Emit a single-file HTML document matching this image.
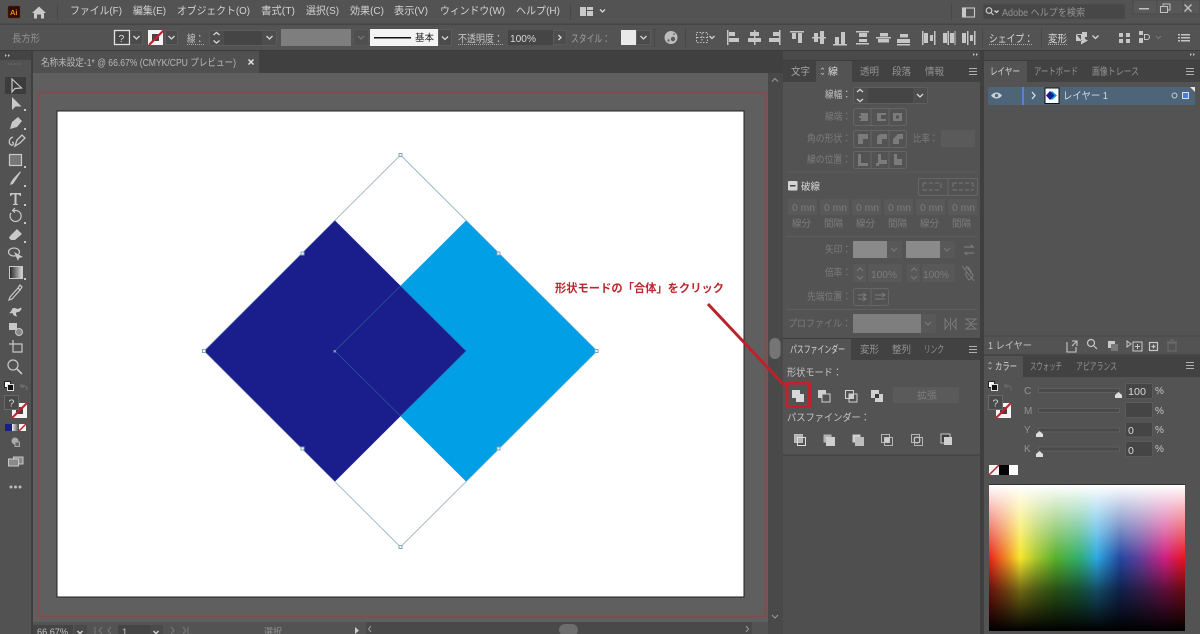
<!DOCTYPE html>
<html lang="ja"><head><meta charset="utf-8"><title>Illustrator</title>
<style>
html,body{margin:0;padding:0;background:#535353;width:1200px;height:634px;overflow:hidden}
svg{display:block;filter:blur(.35px)}
text{font-family:"Liberation Sans","Noto Sans CJK JP",sans-serif;font-size:10px;fill:#cfcfcf}
.m{font-size:10.5px;fill:#d2d2d2}
.c{fill:#c4c4c4}
.d{fill:#7c7c7c}
.t{fill:#939393}
.b{fill:#d8d8d8}
.i{fill:none;stroke:#c8c8c8;stroke-width:1.2}
.f{fill:#c8c8c8}
.g{fill:#7b7b7b}
.o{fill:none;stroke:#656565;stroke-width:1}
.ch{fill:none;stroke:#d6d6d6;stroke-width:1.3}
.chd{fill:none;stroke:#777;stroke-width:1.2}
</style></head><body>
<svg width="1200" height="634" viewBox="0 0 1200 634" xmlns="http://www.w3.org/2000/svg">
<defs>
<linearGradient id="hue" x1="0" x2="1" y1="0" y2="0">
<stop offset="0" stop-color="#e8201c"/><stop offset=".09" stop-color="#f08a22"/><stop offset=".16" stop-color="#f7e62c"/><stop offset=".24" stop-color="#a8c82c"/><stop offset=".34" stop-color="#58b02c"/><stop offset=".46" stop-color="#2fae70"/><stop offset=".55" stop-color="#2ba8e0"/><stop offset=".67" stop-color="#2347a2"/><stop offset=".78" stop-color="#6a3b98"/><stop offset=".9" stop-color="#d01f80"/><stop offset="1" stop-color="#e8141c"/>
</linearGradient>
<linearGradient id="wh" x1="0" x2="0" y1="0" y2="1"><stop offset="0" stop-color="#fff"/><stop offset=".5" stop-color="#fff" stop-opacity="0"/></linearGradient>
<linearGradient id="bk" x1="0" x2="0" y1="0" y2="1"><stop offset=".5" stop-color="#000" stop-opacity="0"/><stop offset=".72" stop-color="#000" stop-opacity=".55"/><stop offset="1" stop-color="#000"/></linearGradient>
<linearGradient id="gr" x1="0" x2="1" y1="0" y2="0"><stop offset="0" stop-color="#222"/><stop offset="1" stop-color="#ddd"/></linearGradient>
<linearGradient id="cm" x1="0" x2="1" y1="0" y2="0"><stop offset="0" stop-color="#eee"/><stop offset="1" stop-color="#444"/></linearGradient>
<symbol id="menu" viewBox="0 0 9 7" overflow="visible"><path d="M0 .5h8M0 3.500h8M0 6.500h8" stroke="#b0b0b0" stroke-width="1"/></symbol>
</defs>

<!-- base -->
<rect width="1200" height="634" fill="#535353"/>
<rect x="0" y="23.500" width="1200" height="1.500" fill="#454545"/>
<rect x="0" y="50" width="1200" height="1" fill="#3c3c3c"/>

<!-- Title/menu row -->
<rect x="8" y="6" width="12" height="12" rx="1" fill="#2f0d05" stroke="#5a2a18" stroke-width=".5"/>
<text x="10" y="15" style="font-size:7.500px;font-weight:bold;fill:#f08a1a">Ai</text>
<path d="M32 13L39 6.500L46 13H44V18.500H41V14.500H37V18.500H34V13Z" fill="#c9c9c9"/>
<rect x="57" y="4" width="1" height="16" fill="#484848"/>
<text class="m" x="70" y="14" textLength="52" lengthAdjust="spacingAndGlyphs">ファイル(F)</text>
<text class="m" x="133" y="14" textLength="33" lengthAdjust="spacingAndGlyphs">編集(E)</text>
<text class="m" x="177" y="14" textLength="73" lengthAdjust="spacingAndGlyphs">オブジェクト(O)</text>
<text class="m" x="261" y="14" textLength="34" lengthAdjust="spacingAndGlyphs">書式(T)</text>
<text class="m" x="306" y="14" textLength="33" lengthAdjust="spacingAndGlyphs">選択(S)</text>
<text class="m" x="350" y="14" textLength="34" lengthAdjust="spacingAndGlyphs">効果(C)</text>
<text class="m" x="394" y="14" textLength="34" lengthAdjust="spacingAndGlyphs">表示(V)</text>
<text class="m" x="440" y="14" textLength="65" lengthAdjust="spacingAndGlyphs">ウィンドウ(W)</text>
<text class="m" x="516" y="14" textLength="44" lengthAdjust="spacingAndGlyphs">ヘルプ(H)</text>
<rect x="570" y="4" width="1" height="16" fill="#484848"/>
<path d="M580 7h6v9h-6zM587 7h6v3h-6zM587 11h6v5h-6z" fill="#c9c9c9"/>
<path class="ch" d="M600 9.500l2.500 2.500 2.500-2.500"/>
<rect x="951" y="4" width="1" height="16" fill="#484848"/>
<rect x="962.500" y="8" width="12" height="9" fill="none" stroke="#c8c8c8" stroke-width="1.100"/><rect x="963" y="8" width="3" height="9" fill="#c8c8c8"/>
<rect x="983" y="4" width="142" height="15" rx="1" fill="#474747" stroke="#4f4f4f"/>
<circle cx="989" cy="10.500" r="2.800" class="i"/><path class="i" d="M991 12.500l2.500 2.500"/><path class="ch" d="M994.500 10.500l2 2 2-2" stroke-width="1"/>
<text x="1002" y="16" class="t" textLength="83" lengthAdjust="spacingAndGlyphs">Adobe ヘルプを検索</text>
<rect x="1133" y="0" width="24" height="14" fill="#585858" stroke="#4a4a4a"/><rect x="1157" y="0" width="26" height="14" fill="#585858" stroke="#4a4a4a"/><rect x="1183" y="0" width="17" height="14" fill="#585858" stroke="#4a4a4a"/>
<rect x="1139" y="8" width="10" height="1.500" fill="#c0c0c0"/>
<rect x="1160.500" y="6.500" width="7" height="6" fill="none" stroke="#c0c0c0"/><path d="M1163 6.500v-2.500h7v6h-2.500" fill="none" stroke="#c0c0c0"/>
<path d="M1184.500 4.500l7 7M1191.500 4.500l-7 7" stroke="#c0c0c0" stroke-width="1.400"/>

<!-- Control bar -->
<text class="t" x="12" y="42" textLength="28" lengthAdjust="spacingAndGlyphs">長方形</text>
<rect x="114.500" y="30.500" width="15" height="14" fill="#484848" stroke="#e0e0e0" stroke-width="1.300"/>
<text x="118.500" y="42" style="font-size:10.500px;fill:#ddd">?</text>
<rect x="130.500" y="30.500" width="12" height="14" fill="#4b4b4b" stroke="#5c5c5c"/><path class="ch" d="M133.500 36l3 3 3-3"/>
<rect x="148" y="30" width="15" height="15" fill="#f4f4f4"/><rect x="152" y="34" width="7" height="7" fill="#444"/><path d="M149 45L164 30" stroke="#c2232c" stroke-width="2.200"/>
<rect x="165.500" y="30.500" width="12" height="14" fill="#4b4b4b" stroke="#5c5c5c"/><path class="ch" d="M168.500 36l3 3 3-3"/>
<text class="c" x="187" y="42" textLength="17" lengthAdjust="spacingAndGlyphs" style="font-size:10.500px">線：</text>
<path d="M187 44.500h17" stroke="#aaa" stroke-dasharray="1 1"/>
<rect x="209.500" y="30.500" width="67" height="15" rx="2" fill="#4d4d4d" stroke="#5c5c5c"/>
<rect x="224" y="31" width="38" height="14" fill="#454545"/>
<path class="ch" d="M213.500 35l3-2.500 3 2.500M213.500 40.500l3 2.500 3-2.500"/><path class="ch" d="M266.500 36l3 3 3-3"/>
<rect x="281" y="29" width="70" height="17" fill="#7e7e7e"/>
<rect x="353.500" y="29.500" width="15" height="16" fill="#4f4f4f" stroke="#585858"/><path class="chd" d="M358 36l3 3 3-3"/>
<rect x="370" y="29" width="68" height="17" fill="#f3f3f3"/><rect x="374" y="37" width="37" height="1.500" fill="#111"/>
<text x="415" y="41" style="font-size:9.500px;fill:#222" textLength="19" lengthAdjust="spacingAndGlyphs">基本</text>
<rect x="438.500" y="29.500" width="13" height="16" fill="#4b4b4b" stroke="#5c5c5c"/><path class="ch" d="M442 36.500l3 3 3-3"/>
<text class="c" x="458" y="42" textLength="45" lengthAdjust="spacingAndGlyphs" style="font-size:10.500px">不透明度：</text>
<path d="M458 44.500h45" stroke="#aaa" stroke-dasharray="1 1"/>
<rect x="508" y="30" width="45" height="15" fill="#454545"/><text x="510" y="42" class="b" textLength="26" lengthAdjust="spacingAndGlyphs" style="font-size:10.500px">100%</text>
<rect x="553.500" y="30.500" width="13" height="14" fill="#4d4d4d" stroke="#5a5a5a"/><path class="ch" d="M558.500 35l2.500 2.500-2.500 2.500"/>
<text x="571" y="42" textLength="39" lengthAdjust="spacingAndGlyphs" style="font-size:10.500px;fill:#a0a0a0">スタイル：</text>
<rect x="621" y="30" width="15" height="15" fill="#e9e9e9"/>
<rect x="636.500" y="30.500" width="14" height="14" fill="#4b4b4b" stroke="#5c5c5c"/><path class="ch" d="M640.500 36l3 3 3-3"/>
<rect x="654" y="28" width="1" height="19" fill="#484848"/>
<circle cx="671" cy="37.500" r="6.500" fill="#bdbdbd"/><circle cx="673" cy="39" r="2.200" fill="#5a5a5a"/><circle cx="668.500" cy="40.500" r="1.200" fill="#666"/><circle cx="674" cy="34" r="1" fill="#777"/>
<rect x="685" y="28" width="1" height="19" fill="#484848"/>
<rect x="696.500" y="32.500" width="11" height="10" fill="none" stroke="#c4c4c4" stroke-dasharray="1.500 1.500"/><path d="M702 33v9M697 37.500h10" stroke="#c4c4c4" stroke-dasharray="1.500 1.500"/><path class="ch" d="M709.500 36l2.500 2.500 2.500-2.500" stroke-width="1"/>
<!-- align icons -->
<g fill="#c6c6c6">
<rect x="727" y="30" width="1.500" height="15"/><rect x="729" y="32" width="6" height="4"/><rect x="729" y="38" width="10" height="4"/>
<rect x="754" y="30" width="1.500" height="15"/><rect x="750" y="32" width="9" height="4"/><rect x="748" y="38" width="13" height="4"/>
<rect x="779" y="30" width="1.500" height="15"/><rect x="773" y="32" width="6" height="4"/><rect x="769" y="38" width="10" height="4"/>
<rect x="790" y="31" width="14" height="1.500"/><rect x="792" y="33" width="4" height="6"/><rect x="798" y="33" width="4" height="10"/>
<rect x="812" y="37" width="14" height="1.500"/><rect x="814" y="33" width="4" height="9"/><rect x="820" y="31" width="4" height="13"/>
<rect x="833" y="44" width="14" height="1.500"/><rect x="835" y="37" width="4" height="7"/><rect x="841" y="32" width="4" height="12"/>
<rect x="856" y="31" width="13" height="1.500"/><rect x="859" y="33" width="8" height="4"/><rect x="856" y="43" width="13" height="1.500"/><rect x="859" y="39" width="8" height="3"/>
<rect x="876" y="37" width="15" height="1.500"/><rect x="880" y="33" width="8" height="3.500"/><rect x="878" y="39" width="11" height="3.500"/>
<rect x="897" y="44" width="13" height="1.500"/><rect x="900" y="34" width="8" height="3.500"/><rect x="897" y="39" width="13" height="4"/>
<rect x="922" y="31" width="1.500" height="14"/><rect x="924" y="33" width="4" height="10"/><rect x="930" y="35" width="3" height="6"/><rect x="934" y="31" width="1.500" height="14"/>
<rect x="943" y="33" width="4" height="10"/><rect x="947.500" y="31" width="1.500" height="14"/><rect x="950" y="33" width="4" height="10"/><rect x="954.500" y="31" width="1" height="14"/>
<rect x="962" y="33" width="4" height="10"/><rect x="967" y="31" width="1.500" height="14"/><rect x="970" y="35" width="3" height="6"/><rect x="974" y="31" width="1.500" height="14"/>
</g>
<rect x="982" y="28" width="1" height="19" fill="#484848"/>
<text class="b" x="989" y="42" textLength="44" lengthAdjust="spacingAndGlyphs" style="font-size:10.500px">シェイプ：</text><path d="M989 44.500h44" stroke="#aaa" stroke-dasharray="1 1"/>
<rect x="1041" y="28" width="1" height="19" fill="#484848"/>
<text class="b" x="1048" y="42" textLength="19" lengthAdjust="spacingAndGlyphs" style="font-size:10.500px">変形</text><path d="M1048 44.500h19" stroke="#aaa" stroke-dasharray="1 1"/>
<path d="M1076 34h6v-2h5v5h-2v2l3 1.500-7 4v-9.500h-5zM1076 34v7h6" fill="#c8c8c8"/>
<path class="ch" d="M1092.500 35.500l3 3 3-3"/>
<path d="M1119 33h4v4h-4zM1126 33h4v4h-4zM1119 39h4v4h-4zM1126 39h4v4h-4z" fill="#c6c6c6"/>
<path d="M1139 31h4v4h-4zM1139 38h4v5h-4zM1144 34h3a3 3 0 0 1 0 6h-3" fill="#c6c6c6"/><path d="M1145 35h2a2 2 0 0 1 0 4h-2" fill="#535353"/>
<path class="chd" d="M1156 36l2.500 2.500 2.500-2.500"/>
<path d="M1178 34h2v1.500h-2zM1181 34h9v1.500h-9zM1178 37h2v1.500h-2zM1181 37h9v1.500h-9zM1178 40h2v1.500h-2zM1181 40h9v1.500h-9z" fill="#c4c4c4"/>

<!-- Tab strip -->
<rect x="33" y="51" width="735" height="22" fill="#404040"/>
<rect x="33" y="51" width="226" height="22" fill="#505050"/>
<text x="41" y="66" textLength="195" lengthAdjust="spacingAndGlyphs" style="font-size:10px;fill:#b8b8b8">名称未設定-1* @ 66.67% (CMYK/CPU プレビュー)</text>
<path d="M248.500 59.500l5 5M253.500 59.500l-5 5" stroke="#e0e0e0" stroke-width="1.500"/>

<!-- Canvas -->
<rect x="33" y="73" width="735" height="549" fill="#5f5f5f"/>
<rect x="38.500" y="92.500" width="727" height="524" fill="none" stroke="#824c4e" stroke-width="2"/>
<rect x="57" y="111" width="687" height="486" fill="#fff" stroke="#222" stroke-width="1"/>
<!-- shapes -->
<path d="M400.500 155L597 351L400.500 547L204 351Z" fill="#fff" stroke="#9db5c6" stroke-width=".9"/>
<path d="M466 220.500L597 351L466 481.500L335 351Z" fill="#009fe6"/>
<path d="M335 220.500L466 351L335 481.500L204.500 351Z" fill="#1a1e8c"/>
<path d="M335 351L400.500 286L466 351L400.500 416Z" fill="#1a1e8c" stroke="#33619f" stroke-width=".6"/>
<g fill="#fff" stroke="#7fa3bc" stroke-width="1">
<rect x="399" y="153.500" width="3" height="3"/><rect x="202.500" y="349.500" width="3" height="3"/><rect x="595" y="349.500" width="3" height="3"/><rect x="399" y="545.500" width="3" height="3"/>
<rect x="301" y="252" width="3" height="3"/><rect x="497" y="252" width="3" height="3"/><rect x="301" y="447" width="3" height="3"/><rect x="497" y="447" width="3" height="3"/>
</g>
<rect x="333.500" y="350" width="2.500" height="2.500" fill="#6f97b4"/>
<text x="555" y="292" textLength="169" lengthAdjust="spacingAndGlyphs" style="font-size:11.500px;font-weight:bold;fill:#b9282f">形状モードの「合体」をクリック</text>

<!-- Toolbar -->
<rect x="0" y="51" width="31" height="583" fill="#525252"/>
<rect x="31" y="51" width="2" height="583" fill="#3f3f3f"/>
<rect x="0" y="51" width="31" height="9" fill="#444"/>
<path d="M5 54l2 1.500-2 1.500zM8 54l2 1.500-2 1.500z" fill="#bbb"/>
<path d="M8 64h13" stroke="#777" stroke-dasharray="1.500 1.500"/>
<rect x="5" y="77" width="21" height="17" rx="1" fill="#3c3c3c"/>
<path class="i" d="M12 79v13l3-3.500 6.500-.5z" stroke-width="1.300"/>
<path d="M12 97v13l3.500-3.500h6z" class="f"/><path d="M24 109h2v2h-2z" class="f"/>
<path d="M10 129l2-7 6-5 4 4-5 6z" class="f"/><path d="M24 128h2v2h-2z" class="f"/>
<path d="M15 146l2-6 5-5 3 3-5 5zM13 137c-4 1-5 6-2 8 3 1 3-3 1-3" fill="none" stroke="#c8c8c8" stroke-width="1.300"/>
<rect x="9.500" y="154.500" width="12" height="11" fill="#777" stroke="#c8c8c8" stroke-width="1.200"/><path d="M24 166h2v2h-2z" class="f"/>
<path d="M21 172l-6 9-2 3-3 1 1-3 2-3 7-7.500z" class="f"/><path d="M24 185h2v2h-2z" class="f"/>
<path d="M10 193h11v3h-1l-1-1.500h-2.500v9.500h1.500v1h-5v-1h1.500v-9.500h-2.500l-1 1.500h-1z" class="f"/><path d="M24 204h2v2h-2z" class="f"/>
<path class="i" d="M11 213a5.500 5.500 0 1 0 5 -2.500h-3M15 208l-2.500 2.500 2.500 2"/>
<path d="M24 222h2v2h-2z" class="f"/>
<path d="M10 236l7-7 5 5-7 6h-4l-2-2z" class="f"/><path d="M24 241h2v2h-2z" class="f"/>
<ellipse cx="14" cy="252" rx="5.500" ry="4" class="i"/><path d="M14 252l9 5-4 1-1 3z" class="f"/>
<rect x="9.500" y="266.500" width="13" height="12" fill="url(#gr)" stroke="#c8c8c8"/><path d="M24 278h2v2h-2z" class="f"/>
<path d="M10 297l8-9 2 2-8 9-3 1zM18 288l2-3 2 2-2 3z" fill="none" stroke="#c8c8c8" stroke-width="1.200"/>
<path d="M9 313c3-1 2-5 5-5s3 2 6 0 1 4-2 4-2 3-1 4-4 0-4-2-2 0-4-1z" class="f"/>
<rect x="9" y="323" width="8" height="7" class="f"/><circle cx="19" cy="332" r="3.500" fill="#888" stroke="#c8c8c8"/>
<path class="i" d="M13 342v-2M9 344h13v8h-9v-12"/>
<circle cx="13" cy="365" r="5" class="i"/><path d="M17 369l5 5" stroke="#c8c8c8" stroke-width="1.600"/>
<rect x="4.500" y="381.500" width="6" height="6" fill="#fff" stroke="#222"/><rect x="7.500" y="384.500" width="6" height="6" fill="#111" stroke="#ddd"/>
<path d="M21 386a4 4 0 0 1 6 4M21 384v3h3" fill="none" stroke="#777"/>
<rect x="12" y="403" width="15" height="15" fill="#f4f4f4"/><rect x="16" y="407" width="7" height="7" fill="#444"/><path d="M12 418l15-15" stroke="#c2232c" stroke-width="2"/>
<rect x="4.500" y="395.500" width="14" height="14" fill="#4a4a4a" stroke="#6a6a6a"/>
<text x="8.500" y="406.500" style="font-size:10.500px;fill:#ddd">?</text>
<rect x="5" y="424" width="7" height="7" fill="#1a1e8c"/><rect x="12" y="424" width="7" height="7" fill="url(#cm)"/><rect x="19" y="424" width="7" height="7" fill="#f3f3f3"/><path d="M19 431l7-7" stroke="#c2232c" stroke-width="1.400"/>
<circle cx="15" cy="441" r="3.500" fill="#aaa"/><rect x="15" y="442" width="4.500" height="4.500" fill="#666" stroke="#aaa"/>
<rect x="13.500" y="457" width="9.500" height="7" fill="#8a8a8a" stroke="#c8c8c8"/><path d="M8.500 459h10v7h-10z" fill="#8a8a8a" stroke="#c8c8c8"/>
<circle cx="11" cy="487" r="1.500" fill="#bbb"/><circle cx="15.500" cy="487" r="1.500" fill="#bbb"/><circle cx="20" cy="487" r="1.500" fill="#bbb"/>

<!-- Vertical scrollbar -->
<rect x="768" y="51" width="15" height="583" fill="#494949"/>
<rect x="768" y="51" width="15" height="22" fill="#404040"/>
<rect x="769.500" y="338" width="11" height="21" rx="5.500" fill="#757575"/>
<path d="M772 81.500l3-3 3 3M772 615l3 3 3-3" fill="none" stroke="#9a9a9a"/>

<!-- Status bar -->
<rect x="33" y="622" width="735" height="12" fill="#535353"/>
<rect x="33" y="625" width="40" height="9" fill="#454545"/>
<text class="c" x="37" y="635" textLength="31" lengthAdjust="spacingAndGlyphs" style="font-size:9.500px">66.67%</text>
<rect x="74" y="625" width="13" height="9" fill="#4a4a4a"/><path class="ch" d="M77.500 631l2.500 2.500 2.500-2.500"/>
<path d="M95 627v7M102 627l-3 3.500 3 3.500M111 627l-3 3.500 3 3.500" fill="none" stroke="#777"/>
<rect x="118" y="625" width="32" height="9" fill="#454545"/><text class="c" x="122" y="635" style="font-size:9.500px">1</text>
<rect x="150" y="625" width="13" height="9" fill="#4a4a4a"/><path class="ch" d="M153.500 631l2.500 2.500 2.500-2.500"/>
<path d="M171 627l3 3.500-3 3.500M183 627l3 3.500-3 3.500M188 627v7" fill="none" stroke="#777"/>
<text class="t" x="264" y="635" style="font-size:9.500px" textLength="18" lengthAdjust="spacingAndGlyphs">選択</text>
<path d="M355 627l4 3.500-4 3.500z" fill="#ccc"/>
<rect x="366" y="622" width="386" height="12" fill="#494949"/>
<path d="M371 626l-2.500 3 2.500 3M746 626l2.500 3-2.500 3" fill="none" stroke="#9a9a9a"/>
<rect x="559" y="624" width="19" height="12" rx="6" fill="#6d6d6d"/>

<!-- Dock gutters -->
<rect x="783" y="51" width="197" height="9" fill="#4a4a4a"/><rect x="984" y="51" width="216" height="9" fill="#4a4a4a"/>
<path d="M973 53l2 1.500-2 1.500zM976 53l2 1.500-2 1.500zM1190 53l2 1.500-2 1.500zM1193 53l2 1.500-2 1.500z" fill="#bbb"/>
<rect x="980" y="51" width="4" height="583" fill="#3f3f3f"/>
<rect x="783" y="60" width="197" height="1" fill="#3c3c3c"/><rect x="984" y="60" width="216" height="1" fill="#3c3c3c"/>

<!-- Stroke panel -->
<rect x="783" y="61" width="197" height="21" fill="#424242"/>
<rect x="816" y="61" width="36" height="21" fill="#535353"/>
<text x="791" y="75" textLength="19" lengthAdjust="spacingAndGlyphs" style="fill:#a6a6a6">文字</text>
<path d="M821 69.500l1.500-1.500 1.500 1.500M821 73l1.500 1.500 1.500-1.500" fill="none" stroke="#bbb" stroke-width=".8"/>
<text class="b" x="828" y="75">線</text>
<text class="t" x="860" y="75" textLength="19" lengthAdjust="spacingAndGlyphs">透明</text>
<text class="t" x="892" y="75" textLength="19" lengthAdjust="spacingAndGlyphs">段落</text>
<text class="t" x="925" y="75" textLength="19" lengthAdjust="spacingAndGlyphs">情報</text>
<use href="#menu" x="969" y="68" width="9" height="7"/>

<text class="c" x="825" y="98" textLength="26" lengthAdjust="spacingAndGlyphs">線幅：</text>
<rect x="853.500" y="87.500" width="74" height="16" rx="2" fill="#4d4d4d" stroke="#5e5e5e"/><rect x="868" y="88" width="45" height="15" fill="#454545"/>
<path class="ch" d="M857 92l3-2.500 3 2.500M857 99l3 2.500 3-2.500"/><path class="ch" d="M917 94l3 3 3-3"/>

<text class="d" x="825" y="120" textLength="26" lengthAdjust="spacingAndGlyphs">線端：</text>
<rect x="853.500" y="108.500" width="53" height="17" rx="2" class="o"/><path d="M871 109v16M889 109v16" stroke="#656565"/>
<path d="M859 113h9v8h-9l2-1v-2h-2v-2h2v-2z" class="g"/><path d="M877 113h9v2h-5v4h5v2h-9z" class="g"/><path d="M893 113h9v8h-9zM896 115.500v3h3v-3z" class="g" fill-rule="evenodd"/>
<text class="d" x="807" y="142" textLength="44" lengthAdjust="spacingAndGlyphs">角の形状：</text>
<rect x="853.500" y="130.500" width="53" height="17" rx="2" class="o"/><path d="M871 131v16M889 131v16" stroke="#656565"/>
<path d="M858 134h10v5h-5v5h-5z" class="g"/><path d="M877 144v-6c0-2 2-4 4-4h6v5h-5v5z" class="g"/><path d="M893 144v-5l5-5h5v5h-4v5z" class="g"/>
<text class="d" x="913" y="142" textLength="25" lengthAdjust="spacingAndGlyphs">比率：</text>
<rect x="941" y="130" width="34" height="17" fill="#5a5a5a"/>
<text class="d" x="807" y="163" textLength="44" lengthAdjust="spacingAndGlyphs">線の位置：</text>
<rect x="853.500" y="151.500" width="53" height="17" rx="2" class="o"/><path d="M871 152v16M889 152v16" stroke="#656565"/>
<path d="M858 154h3v9h7v3h-10z" class="g"/><path d="M878 154h3v6h6v4h-9zM876 163h3v3h-3z" class="g"/><path d="M894 154h3v5h5v6h-8z" class="g"/>

<rect x="788" y="181" width="9.500" height="9.500" rx="1" fill="#d4d4d4"/><rect x="790" y="185" width="5.500" height="1.500" fill="#444"/>
<text class="b" x="801" y="190" textLength="19" lengthAdjust="spacingAndGlyphs">破線</text>
<rect x="918.500" y="178.500" width="59" height="17" rx="1.500" class="o"/><path d="M948 179v16" stroke="#656565"/>
<path d="M923 183h18v1M923 190h18M923 183v7M941 184v6M953 183h20M953 190h20M953 183v7M973 183v7" fill="none" stroke="#777" stroke-dasharray="4 2"/>
<g fill="#595959">
<rect x="788" y="199" width="29" height="16"/><rect x="820" y="199" width="29" height="16"/><rect x="852" y="199" width="29" height="16"/><rect x="884" y="199" width="29" height="16"/><rect x="916" y="199" width="29" height="16"/><rect x="948" y="199" width="29" height="16"/>
</g>
<text class="d" x="792" y="211" textLength="23" lengthAdjust="spacingAndGlyphs">0 mn</text><text class="d" x="824" y="211" textLength="23" lengthAdjust="spacingAndGlyphs">0 mn</text><text class="d" x="856" y="211" textLength="23" lengthAdjust="spacingAndGlyphs">0 mn</text><text class="d" x="888" y="211" textLength="23" lengthAdjust="spacingAndGlyphs">0 mn</text><text class="d" x="920" y="211" textLength="23" lengthAdjust="spacingAndGlyphs">0 mn</text><text class="d" x="952" y="211" textLength="23" lengthAdjust="spacingAndGlyphs">0 mn</text>
<text class="d" x="792" y="227" textLength="19" lengthAdjust="spacingAndGlyphs">線分</text><text class="d" x="824" y="227" textLength="19" lengthAdjust="spacingAndGlyphs">間隔</text><text class="d" x="856" y="227" textLength="19" lengthAdjust="spacingAndGlyphs">線分</text><text class="d" x="888" y="227" textLength="19" lengthAdjust="spacingAndGlyphs">間隔</text><text class="d" x="920" y="227" textLength="19" lengthAdjust="spacingAndGlyphs">線分</text><text class="d" x="952" y="227" textLength="19" lengthAdjust="spacingAndGlyphs">間隔</text>
<rect x="786" y="171.500" width="191" height=".8" fill="#5e5e5e"/><rect x="786" y="236" width="191" height="1" fill="#5e5e5e"/><rect x="786" y="309" width="191" height="1" fill="#5e5e5e"/>

<text class="d" x="825" y="253" textLength="26" lengthAdjust="spacingAndGlyphs">矢印：</text>
<rect x="853" y="241" width="34" height="17" fill="#8a8a8a"/><rect x="887" y="241" width="15" height="17" fill="#585858"/><path class="chd" d="M891 248l3 3 3-3"/>
<rect x="906" y="241" width="34" height="17" fill="#8a8a8a"/><rect x="940" y="241" width="15" height="17" fill="#585858"/><path class="chd" d="M944 248l3 3 3-3"/>
<path d="M964 247h9l-2-2M974 253h-9l2 2" fill="none" stroke="#7b7b7b" stroke-width="1.300"/>
<text class="d" x="825" y="276" textLength="26" lengthAdjust="spacingAndGlyphs">倍率：</text>
<rect x="853" y="264" width="49" height="18" fill="#585858"/><path d="M867 264v18" fill="none" stroke="#4d4d4d"/>
<path class="chd" d="M857 271l3-3 3 3M857 276l3 3 3-3"/><text class="d" x="871" y="278" textLength="26" lengthAdjust="spacingAndGlyphs">100%</text>
<rect x="907" y="264" width="48" height="18" fill="#585858"/><path d="M921 264v18" fill="none" stroke="#4d4d4d"/><path class="chd" d="M911 271l3-3 3 3M911 276l3 3 3-3"/><text class="d" x="923" y="278" textLength="26" lengthAdjust="spacingAndGlyphs">100%</text>
<path d="M965 269l3-2 3 4v3M966 272v4l3 4 3-2 1-3-7-9M962 266l12 15" fill="none" stroke="#7b7b7b"/>
<text class="d" x="807" y="300" textLength="44" lengthAdjust="spacingAndGlyphs">先端位置：</text>
<rect x="853.500" y="288.500" width="35" height="17" rx="2" class="o"/><path d="M871 289v16" stroke="#656565"/>
<path d="M858 295h8M858 299h8M863 293l3 2-3 2M863 297l3 2-3 2" fill="none" stroke="#7b7b7b"/><path d="M875 295h10M875 299h10M882 293l3 2-3 2" fill="none" stroke="#7b7b7b"/>
<text class="d" x="788" y="327" textLength="63" lengthAdjust="spacingAndGlyphs">プロファイル：</text>
<rect x="853" y="314" width="68" height="19" fill="#7e7e7e"/><rect x="921" y="314" width="15" height="19" fill="#585858"/><path class="chd" d="M925 322l3 3 3-3"/>
<path d="M945 319v10l4-5zM956 319v10l-4-5zM950.500 318v12" fill="none" stroke="#7b7b7b"/>
<path d="M966 319h10l-5 4zM966 329h10l-5-4zM965 324h12" fill="none" stroke="#7b7b7b"/>

<!-- Pathfinder panel -->
<rect x="783" y="338" width="197" height="1" fill="#3c3c3c"/>
<rect x="783" y="339" width="197" height="21" fill="#424242"/>
<rect x="783" y="339" width="68" height="21" fill="#535353"/>
<text class="b" x="790" y="353" textLength="55" lengthAdjust="spacingAndGlyphs">パスファインダー</text>
<text class="t" x="860" y="353" textLength="19" lengthAdjust="spacingAndGlyphs">変形</text>
<text class="t" x="892" y="353" textLength="19" lengthAdjust="spacingAndGlyphs">整列</text>
<text class="t" x="924" y="353" textLength="20" lengthAdjust="spacingAndGlyphs">リンク</text>
<use href="#menu" x="969" y="346" width="9" height="7"/>
<text class="c" x="787" y="376" textLength="55" lengthAdjust="spacingAndGlyphs">形状モード：</text>
<!-- shape modes -->
<rect x="792" y="390" width="8" height="8" fill="#d8d8d8"/><rect x="796" y="394" width="8" height="8" fill="#d8d8d8"/>
<rect x="818" y="390" width="8" height="8" fill="#d0d0d0"/><rect x="822" y="394" width="8" height="8" fill="#535353" stroke="#d0d0d0"/>
<rect x="845.500" y="390.500" width="8" height="8" fill="none" stroke="#d0d0d0"/><rect x="849" y="394" width="8" height="8" fill="none" stroke="#d0d0d0"/><rect x="849" y="394" width="4.500" height="4.500" fill="#d0d0d0"/>
<rect x="871" y="390" width="8" height="8" fill="#d0d0d0"/><rect x="875" y="394" width="8" height="8" fill="#d0d0d0"/><rect x="875" y="394" width="4" height="4" fill="#3a3a3a"/>
<rect x="893" y="387" width="66" height="16" fill="#5a5a5a"/>
<text class="d" x="917" y="399" textLength="20" lengthAdjust="spacingAndGlyphs">拡張</text>
<rect x="787" y="383" width="22.500" height="23.500" fill="none" stroke="#c41f2c" stroke-width="3"/>
<text class="c" x="787" y="421" textLength="83" lengthAdjust="spacingAndGlyphs">パスファインダー：</text>
<rect x="794.500" y="434.500" width="8" height="8" fill="#b4b4b4" stroke="#bdbdbd"/><rect x="797.500" y="437.500" width="8" height="8" fill="none" stroke="#dcdcdc"/>
<rect x="823.500" y="434.500" width="8" height="8" fill="#b4b4b4"/><rect x="826" y="437" width="9" height="9" fill="#cfcfcf"/>
<rect x="852.500" y="434.500" width="8" height="8" fill="#d0d0d0"/><rect x="855" y="437" width="9" height="9" fill="#bdbdbd"/>
<rect x="881.500" y="434.500" width="8" height="8" fill="none" stroke="#b4b4b4"/><rect x="884.500" y="437.500" width="8" height="8" fill="none" stroke="#b4b4b4"/><rect x="884.500" y="437.500" width="5" height="5" fill="#cfcfcf"/>
<rect x="911.500" y="434.500" width="8" height="8" fill="none" stroke="#b4b4b4"/><rect x="914.500" y="437.500" width="8" height="8" fill="none" stroke="#b4b4b4"/><circle cx="917" cy="440" r="3" fill="none" stroke="#c8c8c8"/>
<rect x="941" y="434" width="9" height="9" fill="#3f3f3f" stroke="#c8c8c8"/><rect x="944" y="437" width="8" height="8" fill="#cfcfcf"/>
<rect x="783" y="454.500" width="197" height="1.500" fill="#454545"/>
<rect x="783" y="456" width="197" height="178" fill="#4f4f4f"/>

<!-- Annotation arrow -->
<path d="M708 304L785 386" stroke="#bb222b" stroke-width="3" fill="none"/>

<!-- Layers panel -->
<rect x="984" y="61" width="216" height="21" fill="#424242"/>
<rect x="984" y="61" width="43" height="21" fill="#535353"/>
<text class="b" x="990" y="75" textLength="30" lengthAdjust="spacingAndGlyphs">レイヤー</text>
<text class="t" x="1034" y="75" textLength="44" lengthAdjust="spacingAndGlyphs">アートボード</text>
<text class="t" x="1092" y="75" textLength="47" lengthAdjust="spacingAndGlyphs">画像トレース</text>
<use href="#menu" x="1186" y="68" width="9" height="7"/>
<rect x="988" y="87" width="207" height="18" fill="#4d6479"/>
<path d="M1190 87h5v5z" fill="#e8e8e8"/>
<path d="M991 95.500c3-4 8-4 11 0c-3 4-8 4-11 0z" fill="#c8d0d8"/><circle cx="996.500" cy="95.500" r="1.600" fill="#4d6479"/>
<rect x="1022" y="87" width="2" height="18" fill="#5b80d8"/>
<path d="M1032 92l3 3.500-3 3.500" fill="none" stroke="#e0e0e0" stroke-width="1.300"/>
<rect x="1045" y="88" width="14" height="15.500" fill="#fff" stroke="#111"/>
<path d="M1052 91l5 4.500-5 4.500-4-4.500z" fill="#0a9fe6"/><path d="M1050 91l4.500 4.500-4.500 4.500-4-4.500z" fill="#1a1e8c"/>
<text x="1063" y="99" textLength="45" lengthAdjust="spacingAndGlyphs" style="font-size:10.500px;fill:#d0d8e0">レイヤー 1</text>
<circle cx="1174.500" cy="95.500" r="2.500" fill="none" stroke="#c8d0d8"/>
<rect x="1182.500" y="92.500" width="6" height="6" fill="#4c7ae0" stroke="#dde"/>
<rect x="984" y="335.500" width="216" height="1" fill="#474747"/>
<text class="c" x="988" y="349" textLength="44" lengthAdjust="spacingAndGlyphs">1 レイヤー</text>
<path d="M1067 342v10h9v-5M1072 341h5v5M1077 341l-5 5" fill="none" stroke="#c8c8c8" stroke-width="1.100"/>
<circle cx="1091" cy="343" r="3.500" class="i"/><path class="i" d="M1094 346l3 3"/>
<rect x="1108" y="341" width="7" height="7" fill="#c8c8c8"/><rect x="1111" y="344" width="7" height="7" fill="#777"/>
<path d="M1127 341l4 3-4 3zM1133 342h9v9h-9zM1137.500 344v5M1135 346.500h5" fill="none" stroke="#c8c8c8"/>
<rect x="1149.500" y="342.500" width="8" height="8" class="i"/><path class="i" d="M1153.500 344.500v4M1151.500 346.500h4"/>
<path d="M1168 343h8v8h-8zM1167 342h10M1170 340h4" fill="none" stroke="#6c6c6c"/>

<!-- Color panel -->
<rect x="984" y="354" width="216" height="2" fill="#454545"/>
<rect x="984" y="356" width="216" height="21" fill="#424242"/>
<rect x="984" y="356" width="39" height="21" fill="#535353"/>
<path d="M988.500 364l1.500-1.500 1.500 1.500M988.500 367.500l1.500 1.500 1.500-1.500" fill="none" stroke="#bbb" stroke-width=".8"/>
<text class="b" x="995" y="370" textLength="22" lengthAdjust="spacingAndGlyphs">カラー</text>
<text class="t" x="1030" y="370" textLength="32" lengthAdjust="spacingAndGlyphs">スウォッチ</text>
<text class="t" x="1076" y="370" textLength="41" lengthAdjust="spacingAndGlyphs">アピアランス</text>
<use href="#menu" x="1186" y="362" width="9" height="7"/>
<rect x="988.500" y="381.500" width="6" height="6" fill="#fff" stroke="#222"/><rect x="991.500" y="384.500" width="6" height="6" fill="#111" stroke="#ddd"/>
<path d="M1005 386a4 4 0 0 1 6 4M1005 384v3h3" fill="none" stroke="#6f6f6f"/>
<rect x="996" y="403" width="15" height="15" fill="#f4f4f4"/><rect x="1000" y="407" width="7" height="7" fill="#444"/><path d="M996 418l15-15" stroke="#c2232c" stroke-width="2"/>
<rect x="988.500" y="395.500" width="14" height="14" fill="#4a4a4a" stroke="#6a6a6a"/>
<text x="992.500" y="406.500" style="font-size:10.500px;fill:#ddd">?</text>
<g style="font-size:10.500px">
<text class="t" x="1024" y="394">C</text><text class="t" x="1024" y="414">M</text><text class="t" x="1024" y="433">Y</text><text class="t" x="1024" y="452">K</text>
<text class="c" x="1155" y="394">%</text><text class="c" x="1155" y="414">%</text><text class="c" x="1155" y="433">%</text><text class="c" x="1155" y="452">%</text>
</g>
<g fill="#4a4a4a" stroke="#5e5e5e"><rect x="1038.500" y="388.500" width="81" height="4"/><rect x="1038.500" y="408.500" width="81" height="4"/><rect x="1038.500" y="428" width="81" height="4"/><rect x="1038.500" y="447" width="81" height="4"/></g>
<g fill="#dedede"><path d="M1118.500 392l3.500 3v3h-7v-3z"/><path d="M1039.500 431l3.500 3v3h-7v-3z"/><path d="M1039.500 451l3.500 3v3h-7v-3z"/></g>
<g fill="#454545" stroke="#5a5a5a"><rect x="1125.500" y="383.500" width="27" height="15" rx="1"/><rect x="1125.500" y="402.500" width="27" height="15" rx="1"/><rect x="1125.500" y="422" width="27" height="15" rx="1"/><rect x="1125.500" y="441.500" width="27" height="15" rx="1"/></g>
<text class="b" x="1128" y="395" textLength="18" lengthAdjust="spacingAndGlyphs" style="font-size:10.500px">100</text>
<text class="b" x="1128" y="434" style="font-size:10.500px">0</text>
<text class="b" x="1128" y="454" style="font-size:10.500px">0</text>
<rect x="989" y="465" width="10" height="10" fill="#f4f4f4"/><path d="M989 475l10-10" stroke="#c2232c" stroke-width="1.500"/>
<rect x="999" y="465" width="10" height="10" fill="#050505"/><rect x="1009" y="465" width="9" height="10" fill="#fff"/>
<rect x="989" y="485" width="196" height="146" fill="url(#hue)"/>
<rect x="989" y="485" width="196" height="146" fill="url(#wh)"/>
<rect x="989" y="485" width="196" height="146" fill="url(#bk)"/>
<rect x="988.500" y="484" width="197" height="1" fill="#333"/>
</svg>
</body></html>
